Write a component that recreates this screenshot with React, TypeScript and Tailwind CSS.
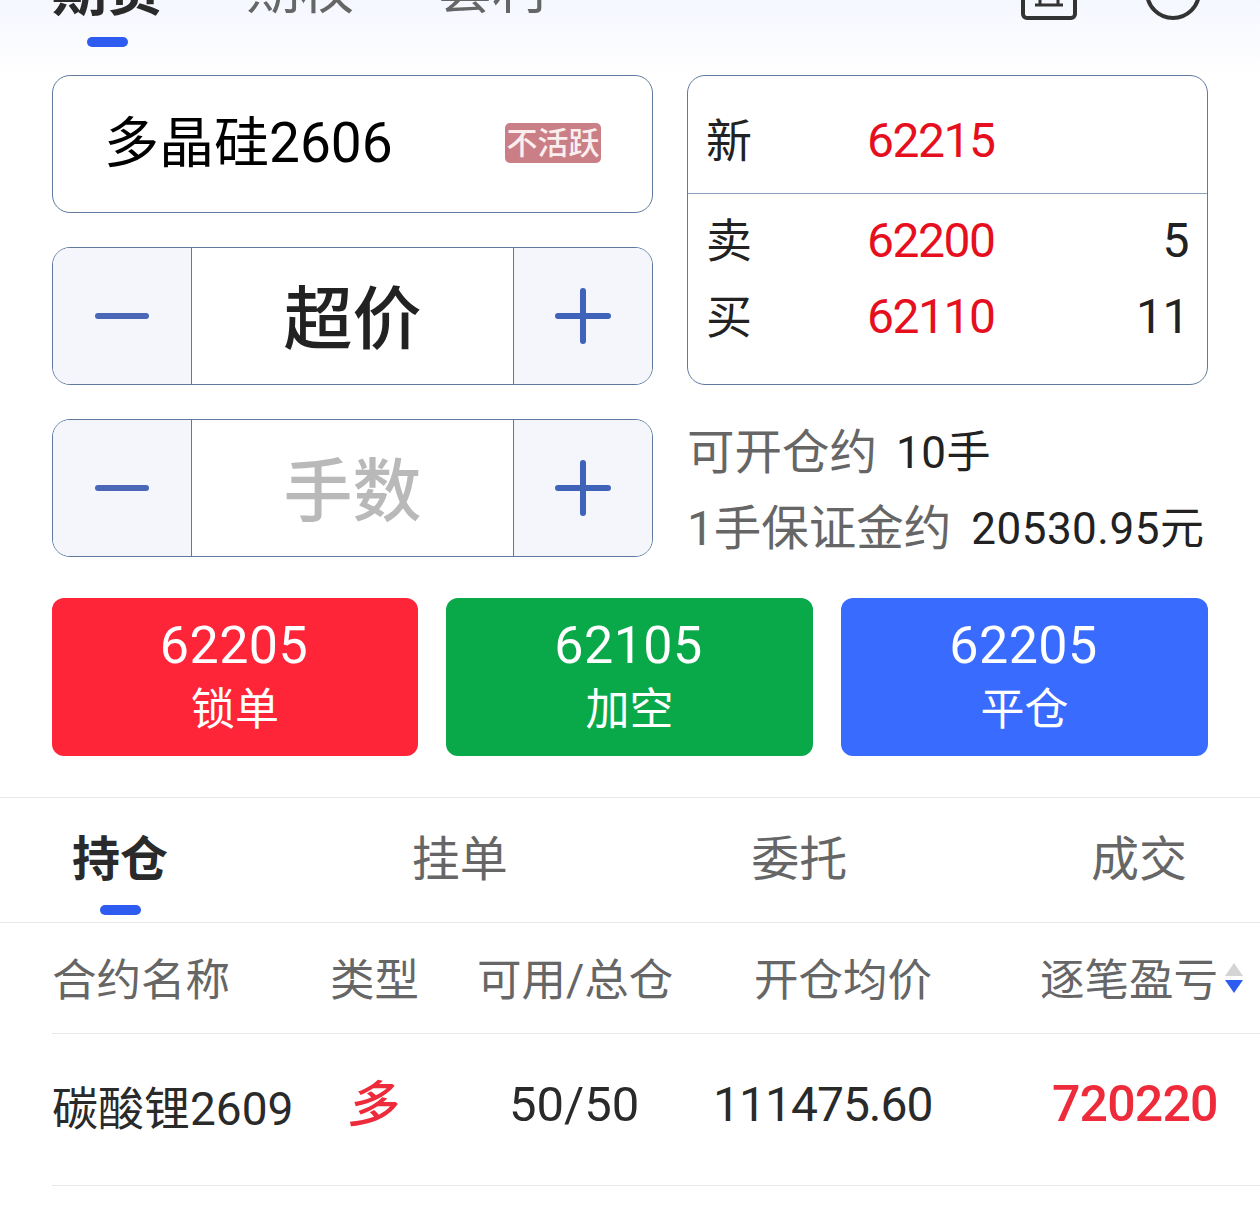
const cjk = { fontFamily: '"Roboto", "Noto Sans CJK SC", sans-serif' };

function Stepper({ label, muted }: { label: string; muted?: boolean }) {
  return (
    <div className="flex h-[138px] overflow-hidden rounded-[18px] border border-[#5f7a9e] bg-white">
      <div className="flex w-[139px] items-center justify-center border-r border-[#5f7a9e] bg-[#f4f6fc]">
        <div className="h-[6px] w-[54px] rounded-full bg-[#4a67b8]" />
      </div>
      <div
        className={`flex flex-1 items-center justify-center pt-[10px] text-[69px] font-medium ${muted ? "text-[#b9b9b9]" : "text-[#222222]"}`}
      >
        {label}
      </div>
      <div className="relative flex w-[139px] items-center justify-center border-l border-[#5f7a9e] bg-[#f4f6fc]">
        <svg width="56" height="56" viewBox="0 0 56 56">
          <path d="M3 28H53M28 3V53" stroke="#3f63b8" strokeWidth="6" strokeLinecap="round" />
        </svg>
      </div>
    </div>
  );
}

function Quote({ k, v, n }: { k: string; v: string; n?: string }) {
  return (
    <div className="flex items-center pl-[18px] pr-[18px]">
      <span className="w-[161px] text-[46px] leading-[60px] text-[#222222]">{k}</span>
      <span className="w-[200px] text-[48px] leading-[60px] tracking-[-1.5px] text-[#e60f20]">{v}</span>
      <span className="flex-1 text-right text-[48px] leading-[60px] tracking-[-0.5px] text-[#222222]">{n}</span>
    </div>
  );
}

function ActionButton({ price, label, color }: { price: string; label: string; color: string }) {
  return (
    <div className={`flex h-[158px] flex-col items-center justify-center rounded-[12px] text-white ${color}`}>
      <span className="-ml-[2px] text-[52px] leading-[66px] tracking-[0.5px]">{price}</span>
      <span className="text-[44px] leading-[62px]">{label}</span>
    </div>
  );
}

export default function App() {
  return (
    <div className="h-[1208px] w-[1260px] overflow-hidden bg-white" style={cjk}>
      <div className="flex h-[75px] items-start justify-between overflow-hidden bg-gradient-to-b from-[#f5f7ff] to-white px-[52px]">
        <div className="flex gap-[84px]">
          <div className="-mt-[39px] flex flex-col items-center">
            <span className="text-[55px] font-bold leading-[60px] text-[#2a2a2a]">期货</span>
            <div className="mt-[16px] h-[10px] w-[41px] rounded-full bg-[#2f5cf0]" />
          </div>
          <span className="-mt-[39px] text-[54px] leading-[60px] text-[#666666]">期权</span>
          <span className="-mt-[39px] text-[54px] leading-[60px] text-[#666666]">套利</span>
        </div>
        <div className="mr-[7px] flex gap-[68px]">
          <svg className="-mt-[36px]" width="56" height="56" viewBox="0 0 56 56" fill="none" stroke="#333333">
            <rect x="2" y="2" width="52" height="52" rx="4" strokeWidth="4" />
            <path d="M14 41H42M19 29V41M37 29V41M16 29H40" strokeWidth="3" />
          </svg>
          <svg className="-mt-[36px]" width="56" height="56" viewBox="0 0 56 56" fill="none">
            <circle cx="28" cy="28" r="26" stroke="#333333" strokeWidth="4" />
          </svg>
        </div>
      </div>

      <div className="grid grid-cols-[601px_521px] gap-x-[34px] px-[52px]">
        <div className="flex flex-col gap-[34px]">
          <div className="flex h-[138px] items-center justify-between rounded-[18px] border border-[#5f7a9e] pl-[51px] pr-[51px]">
            <span className="-mt-[2px] text-[55px] leading-none text-black">多晶硅2606</span>
            <span className="-mt-[2px] flex h-[40px] w-[96px] items-center justify-center rounded-[5px] bg-[#c97f85] text-[31px] font-medium leading-none text-[#fbeeee]">
              不活跃
            </span>
          </div>
          <Stepper label="超价" />
          <Stepper label="手数" muted />
        </div>

        <div className="flex flex-col">
          <div className="flex h-[310px] flex-col rounded-[18px] border border-[#5f7a9e]">
            <div className="flex h-[118px] items-center border-b border-[#8ea2bd] pt-[12px]">
              <Quote k="新" v="62215" />
            </div>
            <div className="mt-[17px] flex flex-col gap-[16px]">
              <Quote k="卖" v="62200" n="5" />
              <Quote k="买" v="62110" n="11" />
            </div>
          </div>
          <div className="mt-[30px] flex items-center text-[47.5px] leading-[76px] text-[#666666]">
            可开仓约<span className="ml-[19px] text-[44px] tracking-[0.5px] text-[#222222]">10手</span>
          </div>
          <div className="flex items-center whitespace-nowrap text-[47.5px] leading-[76px] text-[#666666]">
            1手保证金约<span className="ml-[20px] text-[44px] tracking-[0.5px] text-[#222222]">20530.95元</span>
          </div>
        </div>
      </div>

      <div className="mt-[31px] grid grid-cols-[366px_367px_367px] gap-[28px] px-[52px]">
        <ActionButton price="62205" label="锁单" color="bg-[#ff2538]" />
        <ActionButton price="62105" label="加空" color="bg-[#09a94a]" />
        <ActionButton price="62205" label="平仓" color="bg-[#3a6bff]" />
      </div>

      <div className="mt-[41px] flex h-[126px] justify-between border-y border-[#e8e8ea] pl-[72px] pr-[73px] pt-[32px] text-[48px] leading-[60px] text-[#666666]">
        <div className="flex flex-col items-center">
          <span className="font-bold text-[#2a2a2a]">持仓</span>
          <div className="mt-[15px] h-[10px] w-[41px] rounded-full bg-[#2f5cf0]" />
        </div>
        <span>挂单</span>
        <span>委托</span>
        <span>成交</span>
      </div>

      <div className="ml-[52px] flex h-[111px] items-center border-b border-[#e8e8ea] text-[44.5px] text-[#666666]">
        <span className="w-[278px] pt-[6px]">合约名称</span>
        <span className="w-[147px] pt-[6px]">类型</span>
        <span className="w-[277px] pt-[6px]">可用/总仓</span>
        <span className="w-[286px] pt-[6px]">开仓均价</span>
        <span className="pt-[6px]">逐笔盈亏</span>
        <span className="ml-[7px] flex flex-col gap-[4px]">
          <span className="h-0 w-0 border-x-[9px] border-b-[13px] border-x-transparent border-b-[#d4d4d4]" />
          <span className="h-0 w-0 border-x-[9px] border-t-[13px] border-x-transparent border-t-[#2f5cf0]" />
        </span>
      </div>

      <div className="ml-[52px] flex h-[152px] items-center border-b border-[#e8e8ea] text-[#2a2a2a]">
        <span className="w-[298px] text-[46px]">碳酸锂2609</span>
        <span className="mb-[10px] w-[159px] -skew-x-12 text-[50px] font-medium leading-none text-[#ee2b3b]">多</span>
        <span className="mb-[10px] w-[204px] text-[49px]">50/50</span>
        <span className="mb-[10px] w-[339px] text-[48px] tracking-[-1px]">111475.60</span>
        <span className="mb-[10px] text-[50px] font-medium tracking-[-0.8px] text-[#ee2b3b]">720220</span>
      </div>
    </div>
  );
}
